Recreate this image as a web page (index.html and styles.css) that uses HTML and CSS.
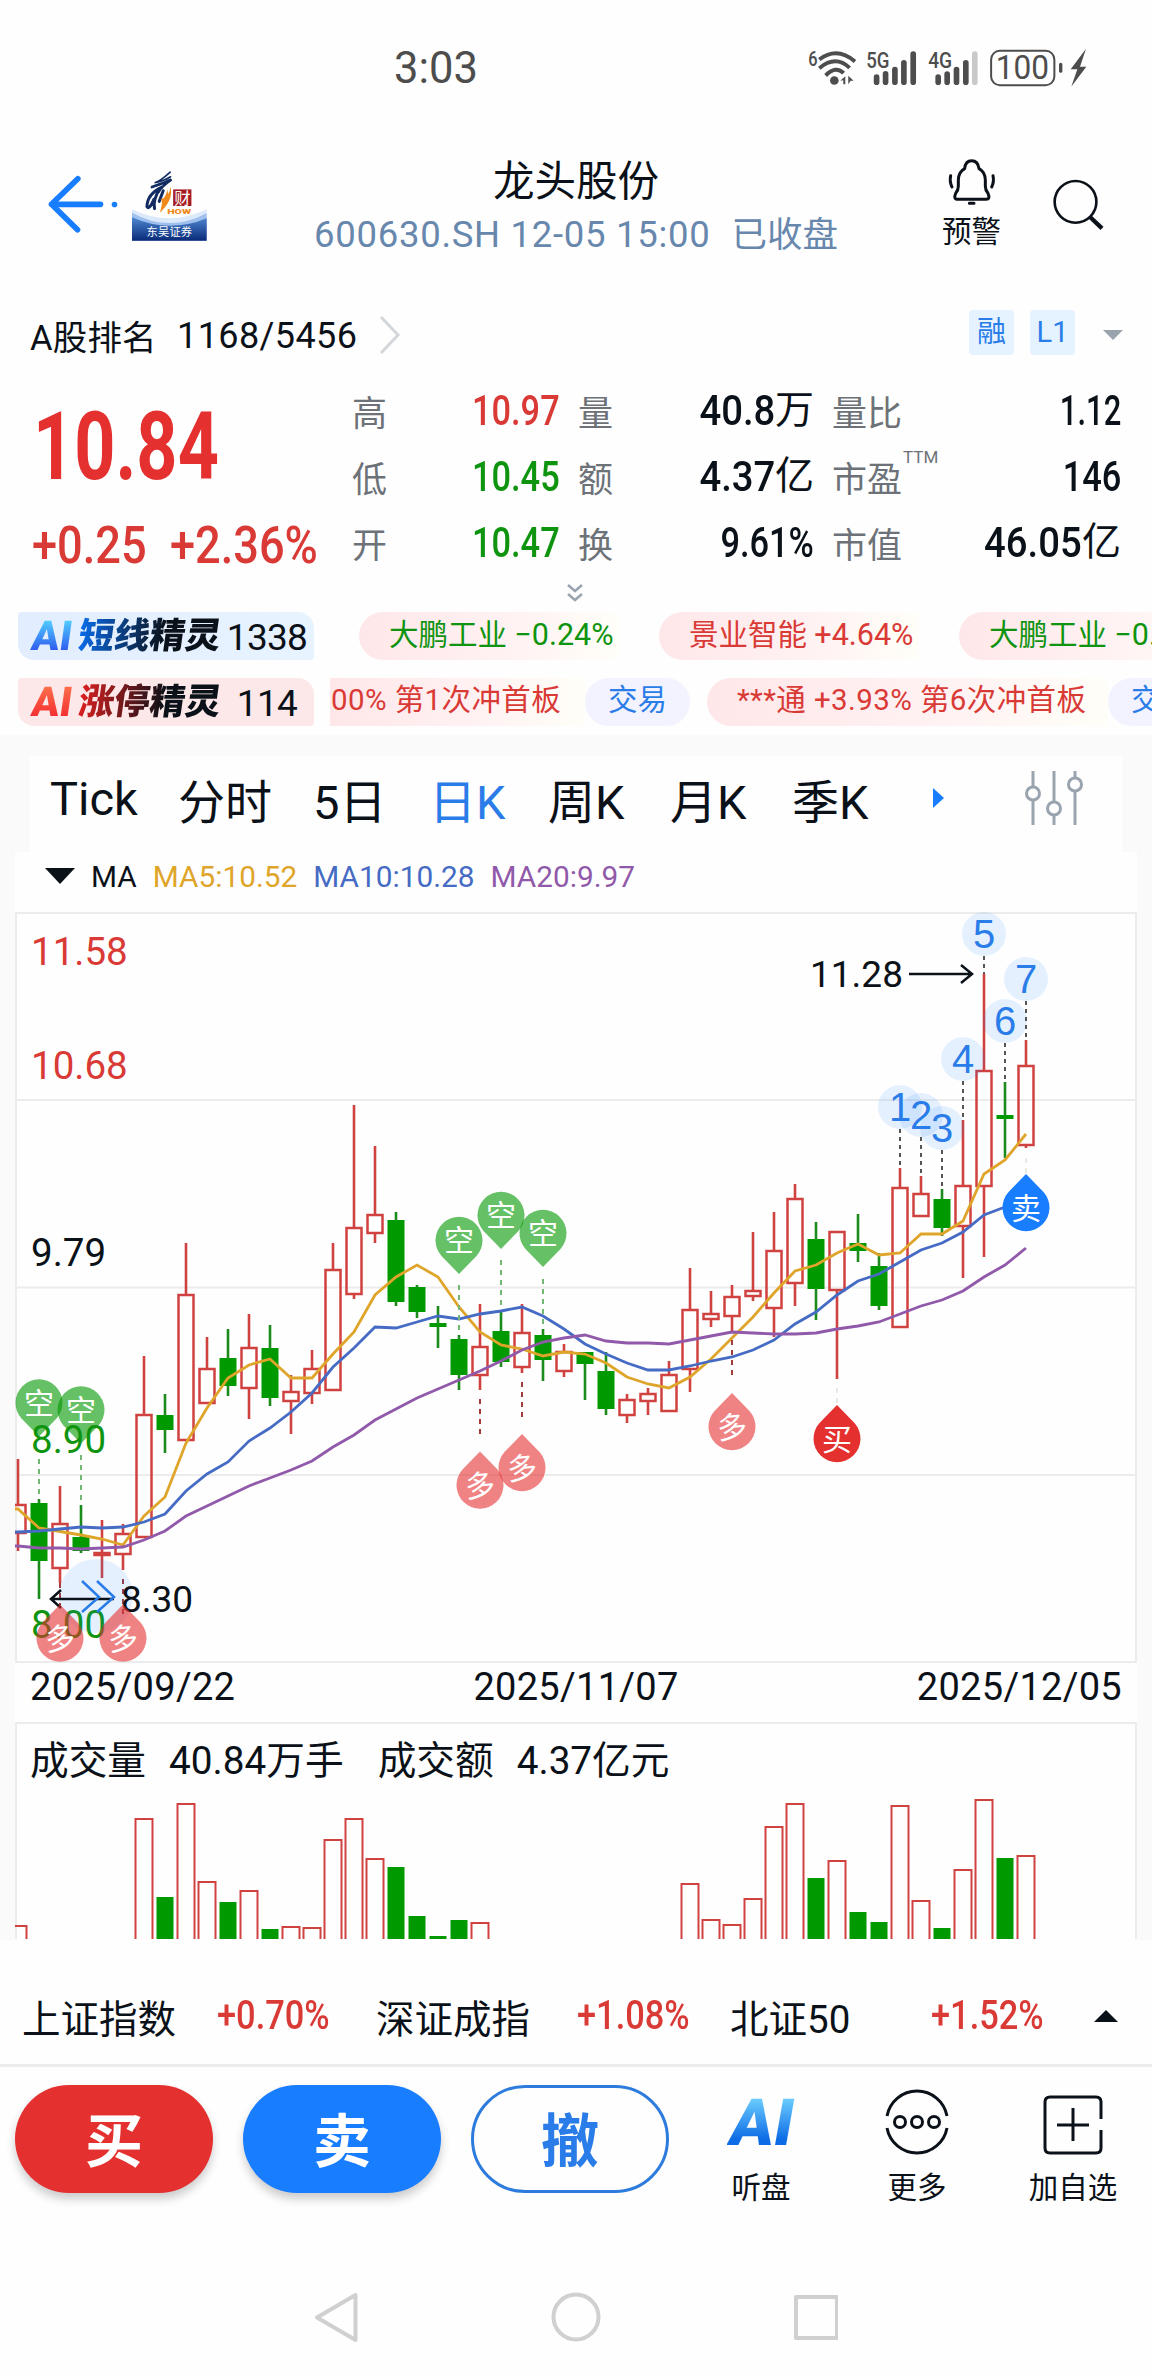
FILE: index.html
```html
<!DOCTYPE html>
<html lang="zh-CN">
<head>
<meta charset="utf-8">
<title>龙头股份</title>
<link rel="stylesheet" href="styles.css">
</head>
<body>
<div class="status">
  <span class="clock">3:03</span>
  <svg class="status-icons" viewBox="50 20 850 125" width="283" height="42">
    <g fill="#4d4d4d" font-family="Roboto" font-weight="500">
      <text x="54" y="75" font-size="62" textLength="28" lengthAdjust="spacingAndGlyphs">6</text>
      <text x="228" y="82" font-size="68" textLength="70" lengthAdjust="spacingAndGlyphs">5G</text>
      <text x="414" y="82" font-size="68" textLength="72" lengthAdjust="spacingAndGlyphs">4G</text>
      <text x="617" y="117" font-size="99" font-weight="400" textLength="160" lengthAdjust="spacingAndGlyphs">100</text>
    </g>
    <g fill="none" stroke="#4d4d4d" stroke-width="12">
      <path d="M87 57Q140 17 194 63M87 83Q136 42 178 82M106 105Q136 74 160 98"/>
      <rect x="603" y="31" width="190" height="103" rx="26" stroke-width="6"/>
    </g>
    <circle cx="132" cy="120" r="13" fill="#4d4d4d"/>
    <path d="M150 121l15-14v24h-6v-12zM174 106l16 15h-9l-7 10z" fill="#4d4d4d"/>
    <g stroke="#4d4d4d" stroke-width="17" stroke-linecap="round">
      <path d="M259 110v15M286 100v25M314 87v38M341 67v58M369 41v84M444 110v15M471 101v24M499 87v38M527 67v58"/>
      <path d="M554 41v84" stroke="#c9c9c9"/>
      <path d="M812 72v20" stroke-width="10"/>
    </g>
    <path d="M888 25L842 86h20l-18 52 45-59h-19z" fill="#4d4d4d"/>
  </svg>
</div>

<header class="header">
  <svg class="back" viewBox="50 70 215 180" width="72" height="60" fill="none" stroke="#197dff" stroke-width="17" stroke-linecap="round" stroke-linejoin="round">
    <path d="M142 84L63 161l78 76M63 161h147M252 161.500v.1"/>
  </svg>
  <svg class="logo" viewBox="306 60 226 213" width="75" height="71">
    <defs><linearGradient id="lg" x1="0" y1="0" x2="0" y2="1"><stop offset="0" stop-color="#4f86d0"/><stop offset="1" stop-color="#082a78"/></linearGradient></defs>
    <path d="M306 178Q418 232 531 178V273H306z" fill="#dce9fa"/>
    <path d="M306 188Q418 250 531 190V273H306z" fill="#9fc0ee"/>
    <path d="M306 202Q418 252 531 205V273H306z" fill="url(#lg)"/>
    <g fill="none" stroke="#122c62" stroke-linecap="round">
      <path d="M421 66Q388 96 374 98Q404 92 422 80" stroke-width="5"/>
      <path d="M366 111Q398 100 425 88Q392 112 387 124" stroke-width="8"/>
      <path d="M395 112Q352 132 351 170Q357 182 372 148M388 118Q368 152 374 176M400 122L388 154" stroke-width="9"/>
    </g>
    <path d="M413 118Q420 150 402 168Q402 150 394 154Q408 140 413 118zM422 110Q432 150 390 188Q402 150 392 148Q420 140 422 110z" fill="#f08a1d"/>
    <rect x="430" y="118" width="55" height="50" fill="#a51d22"/>
    <text x="433" y="161" font-family="Noto Sans CJK SC" font-size="49" fill="#fff">财</text>
    <text x="412" y="192" font-family="Roboto" font-weight="900" font-size="21" fill="#ef8a20" textLength="72" lengthAdjust="spacingAndGlyphs">HOW</text>
    <text x="350" y="257" font-family="Noto Sans CJK SC" font-size="34" fill="#fff" textLength="137">东吴证券</text>
  </svg>
  <div class="heading">
    <h1>龙头股份</h1>
    <p><span class="code">600630.SH 12-05 15:00</span><span class="closed">已收盘</span></p>
  </div>
  <div class="alert">
    <svg viewBox="475 350 150 150" width="50" height="50" fill="none" stroke="#0b1118" stroke-width="9" stroke-linecap="round" stroke-linejoin="round">
      <path d="M528 385Q530 361 549 361Q568 361 571 385Q590 395 590 420V438Q590 450 598 459Q606 477 592 477H508Q493 477 501 459Q509 450 509 438V420Q509 395 528 385z"/>
      <path d="M542 489h14M486 406q-4 18 4 34M613 406q4 18-4 34"/>
    </svg>
    <span>预警</span>
  </div>
  <svg class="search" viewBox="785 415 160 160" width="53" height="53" fill="none" stroke="#0b1118">
    <circle cx="856" cy="487" r="63" stroke-width="8"/><path d="M899 532L936 567" stroke-width="13"/>
  </svg>
</header>

<div class="rank">
  <span class="rank-name">A股排名</span><span class="rank-num">1168/5456</span>
  <svg class="rank-more" width="24" height="42" viewBox="0 0 24 42" fill="none" stroke="#d3d7dc" stroke-width="3"><path d="M3 3L20 21L3 39"/></svg>
  <span class="tag first">融</span><span class="tag">L1</span>
  <svg class="caret" width="20" height="10" viewBox="0 0 20 10"><path d="M0 0h20L10 10z" fill="#9aa4af"/></svg>
</div>

<section class="quote">
  <div class="price">
    <b class="last">10.84</b>
    <div class="delta"><b>+0.25</b><b>+2.36%</b></div>
  </div>
  <dl>
    <div><dt>高</dt><dd class="up"><b>10.97</b></dd></div>
    <div><dt>量</dt><dd><b class="wide">40.8</b><i>万</i></dd></div>
    <div><dt>量比</dt><dd><b class="narrow">1.12</b></dd></div>
    <div><dt>低</dt><dd class="down"><b>10.45</b></dd></div>
    <div><dt>额</dt><dd><b class="wide">4.37</b><i>亿</i></dd></div>
    <div><dt>市盈<sup>TTM</sup></dt><dd><b>146</b></dd></div>
    <div><dt>开</dt><dd class="down"><b>10.47</b></dd></div>
    <div><dt>换</dt><dd><b>9.61%</b></dd></div>
    <div><dt>市值</dt><dd><b class="wide">46.05</b><i>亿</i></dd></div>
  </dl>
</section>
<div class="expand"><svg width="18" height="20" viewBox="0 0 18 20" fill="none" stroke="#9aa4af" stroke-width="2.500"><path d="M2 2l7 6 7-6M2 11l7 6 7-6"/></svg></div>

<div class="ticker">
  <div class="badge blue"><em class="ai">AI</em><em class="name">短线精灵</em><span>1338</span></div>
  <div class="stream one">
    <span class="pill down">大鹏工业 <i>−0.24%</i></span>
    <span class="pill up">景业智能 <i>+4.64%</i></span>
    <span class="pill down">大鹏工业 <i>−0.24%</i></span>
  </div>
</div>
<div class="ticker">
  <div class="badge red"><em class="ai">AI</em><em class="name">涨停精灵</em><span>114</span></div>
  <div class="stream two">
    <span class="pill up cut">00% 第1次冲首板</span>
    <span class="pill trade">交易</span>
    <span class="pill up long">***通 +3.93% 第6次冲首板</span>
    <span class="pill trade">交易</span>
  </div>
</div>

<main class="board">
  <nav class="tabs">
    <span class="tick">Tick</span><span>分时</span><span>5日</span><span class="on">日K</span><span>周K</span><span>月K</span><span>季K</span>
    <svg width="12" height="20" viewBox="0 0 12 20"><path d="M0 0L11 10L0 20z" fill="#197dff"/></svg>
    <svg class="tune" width="58" height="56" viewBox="0 0 58 56" fill="none" stroke="#9aa4af" stroke-width="3">
      <path d="M8 1v16M8 30v25M29 1v30M29 45v10M50 1v7M50 21v34"/><circle cx="8" cy="23.500" r="6.500"/><circle cx="29" cy="38.500" r="6.500"/><circle cx="50" cy="14.500" r="6.500"/>
    </svg>
  </nav>
  <div class="panel">
    <div class="legend">
      <svg width="30" height="16" viewBox="0 0 30 16"><path d="M0 0h30L15 16z" fill="#0b1118"/></svg>
      <span class="ma">MA</span><span class="ma5">MA5:10.52</span><span class="ma10">MA10:10.28</span><span class="ma20">MA20:9.97</span>
    </div>
    <svg id="kline" viewBox="15 902 1122 763" width="1122" height="763"></svg>
    <div class="dates"><span>2025/09/22</span><span>2025/11/07</span><span>2025/12/05</span></div>
    <div class="volume">
      <div class="vol-info"><span>成交量</span><span>40.84万手</span><span>成交额</span><span>4.37亿元</span></div>
      <svg id="vol" viewBox="15 1793 1122 146" width="1122" height="146"></svg>
    </div>
  </div>
</main>

<div class="indices">
  <span class="idx">上证指数</span><b>+0.70%</b>
  <span class="idx">深证成指</span><b>+1.08%</b>
  <span class="idx">北证50</span><b>+1.52%</b>
  <svg width="24" height="12" viewBox="0 0 24 12"><path d="M0 12L12 0L24 12z" fill="#0b1118"/></svg>
</div>

<footer class="actions">
  <button class="buy">买</button><button class="sell">卖</button><button class="cancel">撤</button>
  <div class="act"><em class="ai-big">AI</em><span>听盘</span></div>
  <div class="act more">
    <svg width="64" height="66" viewBox="-32 -33 64 66" fill="none" stroke="#0b1118" stroke-width="3"><path d="M-30-6A30.500 30.500 0 0 1 30-6M-30 6A30.500 30.500 0 0 0 30 6"/><circle cx="-17" r="5.500"/><circle r="5.500"/><circle cx="17" r="5.500"/></svg>
    <span>更多</span></div>
  <div class="act add">
    <svg width="64" height="66" viewBox="-32 -33 64 66" fill="none" stroke="#0b1118" stroke-width="3"><path d="M28-5V-22Q28-27 23-27H-23Q-28-27-28-22V24Q-28 29-23 29H23Q28 29 28 24V6M-16 1H16M0-16V17"/></svg>
    <span>加自选</span></div>
</footer>

<nav class="sysnav">
  <svg width="524" height="52" viewBox="314 2291 524 52" fill="none" stroke="#d0d0d0" stroke-width="4" stroke-linejoin="round"><path d="M355.500 2295V2340L317 2317.500z"/><circle cx="576" cy="2317" r="22.500"/><rect x="796" y="2297" width="41" height="41"/></svg>
</nav>
<script src="chart.js"></script>
</body>
</html>
```
FILE: styles.css
```css
* { box-sizing: border-box; margin: 0; padding: 0; }
body { width: 1152px; height: 2376px; overflow: hidden; background: #fefefe; color: #0b1118; font-family: Roboto, "Noto Sans CJK SC", sans-serif; }
svg { display: block; flex: none; }
i, em { font-style: normal; }
.up { color: #d93a36; }
.down { color: #0f9410; }

.status { display: flex; align-items: center; height: 136px; padding: 0 62px 0 394px; justify-content: space-between; color: #4d4d4d; }
.clock { font-size: 43.500px; line-height: 50px; margin-top: 2px; }

.header { display: flex; height: 154px; padding-left: 47px; }
.back { margin-top: 38px; }
.logo { margin: 34px 0 0 13px; }
.heading { width: 640px; margin-left: 49px; text-align: center; white-space: nowrap; }
.heading h1 { font-size: 41.500px; font-weight: 400; line-height: 60px; margin-top: 16px; }
.heading p { display: flex; justify-content: center; gap: 21px; font-size: 36.500px; line-height: 50px; margin-top: -2px; color: #6787ad; }
.closed { font-size: 35.500px; }
.code { letter-spacing: .7px; }
.alert { width: 60px; margin-left: 46px; padding-top: 21px; }
.alert svg { margin-left: 5px; }
.alert span { display: block; font-size: 29.500px; line-height: 40px; margin-top: 5px; }
.search { margin: 42px 0 0 50px; }

.rank { display: flex; align-items: center; height: 90px; padding-left: 30px; }
.rank-name { font-size: 34.500px; width: 147px; letter-spacing: .2px; white-space: nowrap; }
.rank-num { font-size: 36px; width: 201px; letter-spacing: .4px; margin-top: 2px; }
.tag { width: 45px; height: 45px; line-height: 44px; text-align: center; background: #e5f2ff; color: #2a7de8; border-radius: 4px; font-size: 29px; margin: -5px 16px 0 0; }
.tag.first { margin-left: 567px; }
.caret { margin-left: 12px; }

.quote { display: flex; height: 202px; padding-left: 30px; }
.price { width: 322px; color: #e53030; }
.quote b, .indices b { display: block; font-weight: 500; transform: scaleX(.8); transform-origin: left; white-space: nowrap; }
.price .last { font-size: 94px; line-height: 110px; margin: 12px 0 0 3px; font-weight: 700; transform: scaleX(.765); }
.delta { display: flex; color: #d93a36; font-size: 52.500px; line-height: 64px; margin-top: 11px; padding-left: 2px; }
.delta b { transform: scaleX(.86); }
.delta b:first-child { width: 138px; }
dl { display: grid; grid-template-columns: 208px 236px 289px; grid-auto-rows: 66px; column-gap: 18px; margin-top: -3px; }
dl div { display: flex; justify-content: space-between; align-items: center; }
dt { font-size: 35px; color: #6d7278; position: relative; white-space: nowrap; }
sup { position: absolute; left: 71px; top: -4px; font-size: 17px; line-height: 20px; }
dd { display: flex; align-items: center; font-size: 43px; }
.quote dd b { transform-origin: right; }
.quote dd .wide { transform: scaleX(.89); }
.quote dd .narrow { transform: scaleX(.72); }
dd i { font-size: 39px; line-height: 50px; }

.expand { display: flex; justify-content: center; height: 30px; padding: 1px 2px 0 0; }

.ticker { display: flex; height: 48px; margin-bottom: 18px; overflow: hidden; }
.badge { width: 296px; height: 48px; flex: none; display: flex; align-items: center; margin-left: 18px; padding-left: 14px; border-radius: 4px 16px 4px 16px; white-space: nowrap; }
.badge.blue { background: linear-gradient(90deg, #e2eeff, #e7f3ff); }
.badge.red { background: #fce8e8; }
.badge em { transform: skewX(-8deg); font-weight: 900; background-clip: text; -webkit-background-clip: text; color: transparent; line-height: 46px; }
.badge .ai { width: 44px; font-size: 41px; margin-right: 3px; }
.badge .name { width: 143px; font-size: 35.500px; }
.blue .ai { background-image: linear-gradient(#52cfff 15%, #2d55ee 85%); }
.red .ai { background-image: linear-gradient(#ff704c 15%, #f22c30 85%); }
.blue .name { background-image: linear-gradient(90deg, #0a6be8, #0b1118 60%); }
.red .name { background-image: linear-gradient(90deg, #dd2020, #0b1118 60%); }
.badge span { font-size: 37px; flex: 1; text-align: center; letter-spacing: -.7px; margin: 2px 2px 0 0; }
.stream { flex: 1; min-width: 0; overflow: hidden; display: flex; white-space: nowrap; }
.pill { flex: none; height: 48px; line-height: 45px; font-size: 29.500px; }
.pill.up, .pill.down { background: linear-gradient(90deg, #ffe7e9, #fff1f2 55%, #fffdf7 95%); border-radius: 24px 0 0 24px; }
.stream.one { padding-left: 45px; }
.one .pill { width: 259px; padding-left: 30px; margin-right: 41px; }
.one i { font-size: 30.500px; }
.stream.two { margin-left: 16px; }
.two .pill.cut { width: 255px; border-radius: 0; padding-left: 1px; }
.two .pill.trade { width: 105px; text-align: center; color: #2a7de8; background: #f2f3ff; border-radius: 24px; }
.two .pill.long { width: 401px; margin-left: 17px; padding-left: 30px; }
.pill.cut, .pill.long { letter-spacing: .4px; }

.board { background: #fafafa; height: 1205px; margin-top: -9px; padding: 21px 15px 0; }
.tabs { display: grid; grid-template-columns: 128px 135px 116px 119px 122px 122px 141px 1fr auto; align-items: center; height: 96px; margin: 0 15px; padding: 0 39px 12px 20px; background: #fefefe; font-size: 47px; white-space: nowrap; }
.tabs .on { color: #2a7de8; }
.panel { background: #fefefe; height: 1088px; }
.legend { display: flex; align-items: center; height: 50px; padding: 0 0 2px 30px; font-size: 29.800px; }
.legend span { margin-left: 16px; }
.ma5 { color: #dfa52a; } .ma10 { color: #456bc4; } .ma20 { color: #9059aa; }
.dates { display: flex; justify-content: space-between; height: 57px; padding: 0 15px; font-size: 38px; line-height: 44px; letter-spacing: .3px; }
.volume { border: 2px solid #ececec; border-bottom: 0; height: 217px; }
.volume svg { margin-left: -2px; }
.vol-info { display: flex; height: 69px; padding-left: 13px; font-size: 38.700px; line-height: 74px; }
.vol-info span:nth-child(odd) { margin-right: 23px; }
.vol-info span:nth-child(2) { margin-right: 34px; }
.axis { font: 38.500px Roboto; }
.axis.small { font-size: 37px; }
.pin text { font: 400 30px "Noto Sans CJK SC"; fill: #fff; text-anchor: middle; }
.count { font: 40px "Liberation Sans"; fill: #2a7de8; text-anchor: middle; }

.indices { display: grid; grid-template-columns: 195px 159px 201px 153px 201px 163px 30px; align-items: center; height: 124px; padding: 27px 0 0 22px; font-size: 38.500px; }
.indices b { color: #d93a36; font-size: 40px; transform: scaleX(.86); }
.actions { display: flex; height: 143px; border-top: 3px solid #ececec; padding: 18px 0 0 15px; }
button { width: 198px; height: 108px; margin-right: 30px; border: 0; border-radius: 54px; color: #fff; font: 700 58px/100px "Noto Sans CJK SC"; padding-bottom: 4px; }
.buy { background: #e53030; box-shadow: 0 6px 10px rgba(0,0,0,.2); }
.sell { background: #197dff; box-shadow: 0 6px 10px rgba(0,0,0,.2); }
.cancel { background: #fefefe; border: 3px solid #2d7bdc; color: #2a7de8; line-height: 94px; }
.act { width: 156px; display: flex; flex-direction: column; align-items: center; font-size: 29.500px; padding-top: 2px; }
.act span { line-height: 40px; white-space: nowrap; }
.act svg { height: 66px; margin: 2px 0 13px; }
.act:nth-child(4) { margin-left: -16px; }
.act.add svg { margin: 4px 0 11px; }
.ai-big { height: 66px; margin: 0 0 15px 3px; font: 900 65px/72px Roboto; transform: skewX(-10deg); background: linear-gradient(#6fd0ff 15%, #0d6be5 80%); background-clip: text; -webkit-background-clip: text; color: transparent; }
.sysnav { display: flex; padding: 84px 0 0 314px; }
```
FILE: chart.js
```js
// Candle rows: [high, body top, body bottom, low, rising, volume top]
const candles = [
[1459,1505,1533,1551,1,1926],[1499,1503,1561,1599,0],[1486,1524,1568,1583,1],[1505,1537,1551,1553,0],[1520,1553,1555,1578,1],
[1524,1534,1554,1570,1],[1356,1415,1537,1537,1,1819],[1394,1415,1430,1453,0,1898],[1243,1295,1440,1440,1,1804],[1337,1369,1403,1404,1,1882],
[1329,1358,1386,1396,0,1903],[1314,1348,1388,1419,1,1891],[1325,1348,1398,1406,0,1930],[1375,1392,1401,1434,1,1927],[1350,1369,1393,1404,1,1928],
[1243,1270,1390,1390,1,1840],[1105,1228,1294,1299,1,1819],[1146,1215,1233,1243,1,1859],[1212,1220,1302,1306,0,1868],[1285,1287,1312,1318,0,1917],
[1306,1323,1327,1348,0,1937],[1335,1339,1375,1390,0,1921],[1304,1347,1375,1390,1,1923],[1310,1331,1362,1367,0],[1304,1333,1367,1373,1],
[1329,1335,1360,1381,0],[1344,1352,1371,1377,1],[1352,1352,1364,1400,0],[1352,1371,1409,1415,0],[1394,1400,1415,1423,1],
[1388,1394,1401,1415,1],[1361,1375,1411,1411,1],[1268,1310,1369,1392,1,1884],[1291,1314,1319,1327,1,1920],[1285,1297,1316,1332,1,1925],
[1232,1291,1296,1301,1,1899],[1212,1251,1308,1337,1,1827],[1184,1199,1283,1306,1,1804],[1222,1239,1289,1320,0,1879],[1232,1232,1290,1379,1,1861],
[1214,1243,1251,1262,0,1913],[1253,1266,1306,1310,0,1923],[1168,1188,1327,1327,1,1806],[1176,1194,1216,1216,1,1901],[1189,1199,1228,1236,0,1929],
[1120,1186,1226,1278,1,1870],[974,1071,1186,1257,1,1800],[1082,1115,1119,1158,0,1859],[1040,1066,1145,1148,1,1856]];
const averages = {
'#dfa52a':[1509,1528,1531.5,1535,1539,1545,1516,1497,1443,1408,1378,1365,1359,1378,1378,1354,1332,1295,1277,1265,1277,1307,1332,1345,1349,1356,1352,1354,1363,1377,1384,1388,1377,1359,1338,1317,1293,1271,1265,1253,1244,1255,1253,1234,1234,1221,1174,1160,1134],
'#456bc4':[1532,1531,1529,1527,1528,1527,1522,1514,1491,1474,1462,1441,1428,1412,1393,1367,1348,1327,1328,1322,1316,1319,1314,1311,1307,1316,1329,1344,1354,1363,1370,1370,1366,1361,1357,1350,1340,1324,1312,1295,1281,1274,1262,1250,1243,1232,1215,1207,1203],
'#9059aa':[1546,1548,1548,1549,1548,1547,1540,1531,1516,1506,1496,1486,1478,1470,1461,1447,1435,1420,1409,1398,1389,1380,1371,1361,1350,1342,1338,1335,1341,1343,1343,1344,1340,1336,1332,1333,1334,1334,1333,1329,1326,1322,1314,1306,1300,1291,1277,1265,1248]};
const RED = '#d04240', GREEN = '#009900', x = i => 18 + 21 * i;
let k = '';
const line = (x1, y1, x2, y2, c, w, dash = '') => `<line x1="${x1}" y1="${y1}" x2="${x2}" y2="${y2}" stroke="${c}" stroke-width="${w}" stroke-dasharray="${dash}"/>`;
const label = (tx, ty, s, c, size = '') => `<text class="axis ${size}" x="${tx}" y="${ty}" fill="${c}">${s}</text>`;

k += '<path d="M15 913H1136V1662H16V913M16 1100H1136M16 1287.500H1136M16 1475H1136" fill="none" stroke="#ececec" stroke-width="2"/>';
candles.forEach(([hi, top, bot, lo, up], i) => {
  const c = up ? RED : GREEN, w = up ? c : '#1b8c1b';
  k += line(x(i), hi, x(i), top, w, 2.6) + line(x(i), bot, x(i), lo, w, 2.6);
  k += up ? `<rect x="${x(i) - 7.5}" y="${top}" width="15" height="${bot - top}" fill="none" stroke="${c}" stroke-width="2.5"/>`
          : `<rect x="${x(i) - 8.5}" y="${top}" width="17" height="${bot - top}" fill="${c}"/>`;
});
for (const [c, ys] of Object.entries(averages))
  k += `<polyline points="15,${ys[0]} ${ys.map((y, i) => x(i) + ',' + y).join(' ')}" fill="none" stroke="${c}" stroke-width="2.8"/>`;

// Dashed leaders between candles and their signals
[[39,1459,1499],[81,1455,1505],[459,1285,1335],[501,1260,1310],[543,1279,1329]].forEach(([a, b, d]) => k += line(a, b, a, d, '#72b872', 2, '5 5'));
[[60,1583,1612],[123,1579,1614],[480,1399,1434],[522,1382,1417],[732,1340,1375]].forEach(([a, b, d]) => k += line(a, b, a, d, '#a33b3b', 2, '5 5'));
[[837,1388,1405],[1026,1158,1174]].forEach(([a, b, d]) => k += line(a, b, a, d, '#e8e8e8', 2, '5 5'));

const pin = (cx, cy, s, fill, dir, turn = 0) => `<g class="pin"><path transform="translate(${cx} ${cy}) scale(1 ${dir})" d="M0 34L17.500 16A23.500 23.500 0 1 0-17.500 16z" fill="${fill}"/><text x="${cx}" y="${cy + 11}" transform="rotate(${turn} ${cx} ${cy})">${s}</text></g>`;
[[39,1402.5],[81,1409.5],[459,1240],[501,1215],[543,1233]].forEach(p => k += pin(...p, '空', 'rgba(0,152,0,.6)', 1));

k += label(31, 965, '11.58', '#d93a36') + label(31, 1079, '10.68', '#d93a36') + label(31, 1266, '9.79', '#0b1118');
k += label(31, 1453, '8.90', '#0f9410') + label(31, 1638, '8.00', '#0f9410');
k += '<circle cx="96" cy="1596" r="37" fill="#197dff" fill-opacity=".11"/>';
k += '<path d="M114 1599H51M61 1590L51 1599L61 1608M909 974H971M961 965L972 974L961 983" fill="none" stroke="#0b1118" stroke-width="2.500"/>';
k += '<path d="M82 1581L99 1597L82 1612M97 1581L114 1597L97 1612" fill="none" stroke="#2a7de8" stroke-width="2.500"/>';
k += label(121, 1612, '8.30', '#0b1118', 'small') + label(810, 987, '11.28', '#0b1118', 'small');
[[60,1638.5],[123,1638.5],[480,1485.5],[522,1468],[732,1427]].forEach(p => k += pin(...p, '多', 'rgba(229,48,48,.6)', -1, -6));
k += pin(837, 1439, '买', '#e53030', -1) + pin(1026, 1208, '卖', '#197dff', -1);

[[900,1107],[921,1115],[942,1128],[963,1059],[984,934],[1005,1021],[1026,979]].forEach(([cx, cy], n) => {
  k += `<circle cx="${cx}" cy="${cy}" r="22" fill="#197dff" fill-opacity=".11"/>` + line(cx, cy + 22, cx, candles[42 + n][0], '#555', 2, '4 4');
  k += `<text class="count" x="${cx}" y="${cy + 14}">${n + 1}</text>`;
});
document.getElementById('kline').innerHTML = k;

document.getElementById('vol').innerHTML = candles.map(([, , , , up, v], i) => !v ? '' : up
  ? `<rect x="${x(i) - 8.5}" y="${v}" width="17" height="200" fill="none" stroke="${RED}" stroke-width="2"/>`
  : `<rect x="${x(i) - 8.5}" y="${v - 1}" width="17" height="200" fill="${GREEN}"/>`).join('');
```
